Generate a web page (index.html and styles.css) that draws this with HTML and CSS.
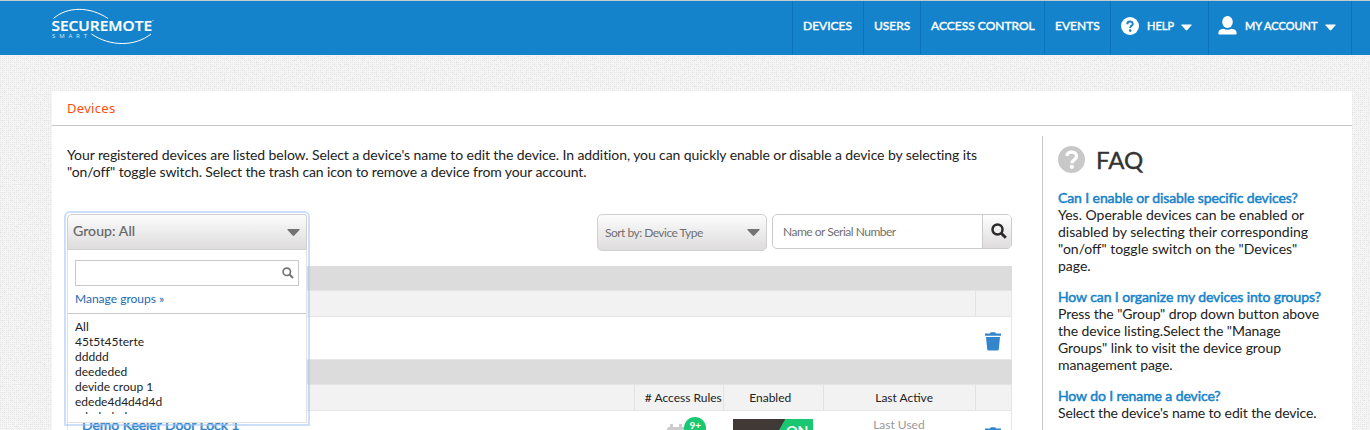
FILE: index.html
```html
<!DOCTYPE html>
<html lang="en">
<head>
<meta charset="utf-8">
<title>Devices</title>
<link rel="stylesheet" href="styles.css">
</head>
<body>
<header class="topbar">
  <svg class="logo" width="104" height="40" viewBox="0 0 104 40">
    <path class="arc" d="M1.500 9.500C15 -2.700 38 -2.700 56 9.500M39.500 25C58 37.700 83 37.700 99 25"/>
    <text class="logo-name" x="-.5" y="22.200" textLength="100.500" lengthAdjust="spacingAndGlyphs">SECUREMOTE</text>
    <text class="logo-sub" x="0" y="28.800" textLength="35" lengthAdjust="spacing">SMART</text>
    <circle class="logo-dot" cx="101" cy="11.500" r=".7"/>
  </svg>
  <nav class="nav">
    <a class="item devices">DEVICES</a>
    <a class="item users">USERS</a>
    <a class="item access">ACCESS CONTROL</a>
    <a class="item events">EVENTS</a>
    <a class="item help">
      <svg width="18" height="18" viewBox="0 0 18 18"><circle cx="9" cy="9" r="9" fill="#fff"/><path d="M6.300 7.300C6.300 3.500 11.700 3.700 11.700 6.900C11.700 8.900 9.200 8.800 9.200 11" fill="none" stroke="#1583cb" stroke-width="2"/><circle cx="9.200" cy="13.600" r="1.300" fill="#1583cb"/></svg>
      <span class="label">HELP</span>
      <svg class="caret" width="11" height="7" viewBox="0 0 11 7"><path d="M.8.5H10.200Q11 .5 10.500 1.300L6.300 6Q5.500 6.800 4.700 6L.5 1.300Q0 .5.800.5Z" fill="#fff"/></svg>
    </a>
    <a class="item account">
      <svg width="19" height="19" viewBox="0 0 19 19"><ellipse cx="9.500" cy="6" rx="5.300" ry="6" fill="#fff"/><path d="M.3 17.500C.3 14.300 2.300 12.900 5.200 12.700Q9.500 15 13.800 12.700C16.700 12.900 18.700 14.300 18.700 17.500Q18.700 18.500 17.700 18.500H1.300Q.3 18.500.3 17.500Z" fill="#fff"/></svg>
      <span class="label">MY ACCOUNT</span>
      <svg class="caret" width="11" height="7" viewBox="0 0 11 7"><path d="M.8.5H10.200Q11 .5 10.500 1.300L6.300 6Q5.500 6.800 4.700 6L.5 1.300Q0 .5.800.5Z" fill="#fff"/></svg>
    </a>
  </nav>
</header>
<main class="card">
  <h1 class="title">Devices</h1>
  <div class="columns">
    <section class="content">
      <p class="intro">Your registered devices are listed below. Select a device's name to edit the device. In addition, you can quickly enable or disable a device by selecting its<br><span class="intro-end">"on/off" toggle switch. Select the trash can icon to remove a device from your account.</span></p>
      <div class="filters">
        <div class="group">
          <div class="group-menu">
            <div class="group-button"><span>Group: All</span><svg width="13" height="7" viewBox="0 0 12 7"><path d="M0 0H12V1L6.800 6.600Q6 7.300 5.200 6.600L0 1Z" fill="#737373"/></svg></div>
            <div class="group-panel">
              <div class="group-search"><svg width="12" height="12" viewBox="0 0 12 12"><circle cx="4.800" cy="4.800" r="3.700" fill="none" stroke="#737373" stroke-width="1.700"/><path d="M7.500 7.500L11 11" stroke="#737373" stroke-width="2"/></svg></div>
              <a class="manage">Manage groups »</a>
              <ul class="group-list"><li>All</li><li>45t5t45terte</li><li>ddddd</li><li>deededed</li><li>devide croup 1</li><li>edede4d4d4d4d</li><li>edededed</li></ul>
            </div>
          </div>
        </div>
        <div class="sort"><span>Sort by: Device Type</span><svg width="13" height="7" viewBox="0 0 12 7"><path d="M0 0H12V1L6.800 6.600Q6 7.300 5.200 6.600L0 1Z" fill="#737373"/></svg></div>
        <div class="search"><div class="search-field">Name or Serial Number</div><div class="search-button"><svg width="16" height="16" viewBox="0 0 16 16"><circle cx="6.500" cy="6.500" r="5" fill="none" stroke="#2b2b2b" stroke-width="2.500"/><path d="M10 10L14.800 14.800" stroke="#2b2b2b" stroke-width="3"/></svg></div></div>
      </div>
      <div class="table">
        <div class="band"></div>
        <div class="row head"><div class="c-name"></div><div class="c-blank"></div><div class="c-del"></div></div>
        <div class="row empty"><div class="c-name"></div><div class="c-blank"></div><div class="c-del"><svg width="16" height="19" viewBox="0 0 16 19"><path d="M0 1.500H5L5.800.3H10.200L11 1.500H16V3.800H0ZM1 5H15L13.800 17.300Q13.600 18.600 12.300 18.600H3.700Q2.400 18.600 2.200 17.300Z" fill="#3385cc"/></svg></div></div>
        <div class="band second"></div>
        <div class="row head"><div class="c-name"></div><div class="c-rules">#&nbsp;Access Rules</div><div class="c-on">Enabled</div><div class="c-last">Last Active</div><div class="c-del"></div></div>
        <div class="row device">
          <div class="c-name">Demo Keeler Door Lock 1</div>
          <div class="c-rules"><span class="rules"><svg width="22" height="22" viewBox="0 0 22 22"><path d="M0 5Q0 3 2 3H3V0H6V3H12V0H15V3H18V20H0Z" fill="#ccc"/></svg><b class="badge">9+</b></span></div>
          <div class="c-on"><span class="toggle"><i>ON</i></span></div>
          <div class="c-last">Last Used</div>
          <div class="c-del"><svg width="16" height="19" viewBox="0 0 16 19"><path d="M0 1.500H5L5.800.3H10.200L11 1.500H16V3.800H0ZM1 5H15L13.800 17.300Q13.600 18.600 12.300 18.600H3.700Q2.400 18.600 2.200 17.300Z" fill="#3385cc"/></svg></div>
        </div>
      </div>
    </section>
    <aside class="faq">
      <h2><svg width="27" height="27" viewBox="0 0 27 27"><circle cx="13.500" cy="13.500" r="13.500" fill="#c8c8c8"/><path d="M8.700 9.800C9.800 4.700 18.600 5 18.600 10.300C18.600 13.700 14 13.500 14 17.200" fill="none" stroke="#fff" stroke-width="3.200"/><circle cx="13.900" cy="20.800" r="2.100" fill="#fff"/></svg><span>FAQ</span></h2>
      <h3 class="q1">Can I enable or disable specific devices?</h3>
      <p class="a1">Yes. Operable devices can be enabled or<br>disabled by selecting their corresponding<br>"on/off" toggle switch on the "Devices"<br>page.</p>
      <h3>How can I organize my devices into groups?</h3>
      <p>Press the "Group" drop down button above<br>the device listing.Select the "Manage<br>Groups" link to visit the device group<br>management page.</p>
      <h3>How do I rename a device?</h3>
      <p class="a3">Select the device's name to edit the device.</p>
    </aside>
  </div>
</main>
</body>
</html>
```
FILE: styles.css
```css
* { box-sizing: border-box; }
html, body { height: 430px; overflow: hidden; }
body {
  margin: 0;
  font-family: Lato, sans-serif;
  font-size: 14px;
  line-height: 17px;
  color: #222;
  background-color: #f7f7f7;
  background-image:
    url("data:image/svg+xml,%3Csvg xmlns='http://www.w3.org/2000/svg' width='200' height='200'%3E%3Cfilter id='n'%3E%3CfeTurbulence type='fractalNoise' baseFrequency='.5' numOctaves='2' stitchTiles='stitch'/%3E%3CfeColorMatrix values='0 0 0 0 .4 0 0 0 0 .4 0 0 0 0 .4 .4 0 0 0 -.17'/%3E%3C/filter%3E%3Crect width='200' height='200' filter='url(%23n)'/%3E%3C/svg%3E"),
    conic-gradient(from 270deg at 1px 1px, rgba(0,0,0,.05) 90deg, transparent 0);
  background-size: 200px 200px, 2px 2px;
}
h1, h2, h3, p, ul { margin: 0; padding: 0; font-weight: 400; }
.topbar {
  display: flex;
  justify-content: space-between;
  height: 55px;
  padding: 0 18px 0 52px;
  background: #1583cb;
  border-top: 1px solid #c5cdd1;
}
.logo { margin-top: 8px; overflow: visible; }
.arc { fill: none; stroke: #fff; stroke-width: 1; }
.logo-name { font: 600 14px "Open Sans", sans-serif; fill: #fff; stroke: #fff; stroke-width: .2; }
.logo-sub { font: 6px "Open Sans", sans-serif; fill: #d4e8f6; }
.logo-dot { fill: #9fcbe9; }
.nav { display: flex; border-right: 1px solid #0b73b9; }
.item {
  display: flex;
  align-items: center;
  height: 54px;
  padding: 0 0 5px 10px;
  border-left: 1px solid #0b73b9;
  color: #fff;
  font-size: 12px;
  white-space: nowrap;
  -webkit-text-stroke: .4px #fff;
}
.devices { width: 71px; }
.users { width: 57px; }
.access { width: 124px; }
.events { width: 66px; }
.help { width: 98px; }
.account { width: 143px; padding-left: 9px; }
.label { margin: 0 7px 0 8px; font-size: 11px; }
.caret { margin-top: 3px; }
.card { width: 1300px; height: 339px; margin: 36px 0 0 52px; background: #fff; overflow: hidden; }
.title {
  height: 35px;
  padding: 0 15px;
  border-bottom: 1px solid #c6c6c6;
  font: 13px/35px "Noto Sans", sans-serif;
  letter-spacing: .3px;
  color: #ff4c0b;
}
.columns { display: flex; justify-content: space-between; padding: 0 0 0 15px; }
.content { width: 945px; padding-top: 20px; }
.intro { height: 34px; white-space: nowrap; letter-spacing: -.09px; }
.intro-end { letter-spacing: -.12px; }
.filters { display: flex; margin-top: 34px; height: 52px; align-items: flex-start; }
.group { position: relative; width: 530px; }
.group-menu {
  position: absolute;
  z-index: 2;
  left: 0;
  top: 0;
  width: 240px;
  height: 209px;
  background: #fff;
  border-radius: 3px 3px 0 0;
  outline: 2px solid rgba(160,195,250,.55);
  outline-offset: 1px;
}
.group-button, .sort {
  display: flex;
  align-items: center;
  justify-content: space-between;
  border: 1px solid #d0d0d0;
  border-radius: 5px;
  background: linear-gradient(#fcfcfc, #dedcdd);
  color: #666;
}
.group-button {
  height: 36px;
  padding: 0 6px 3px 5px;
  border-radius: 5px 3px 0 0;
  letter-spacing: .1px;
  -webkit-text-stroke: .2px #666;
}
.group-button svg { margin-top: 4px; }
.group-panel { height: 173px; padding: 10px 0 0; border: 1px solid #e2e2e2; border-top: 0; font-size: 12px; line-height: 15px; }
.group-search { display: flex; align-items: center; justify-content: flex-end; width: 224px; height: 26px; margin-left: 7px; padding-right: 4px; border: 1px solid #c9c9c9; }
.manage { display: block; height: 28px; padding: 5px 7px 0; border-bottom: 1px solid #c9c9c9; color: #1b69b1; }
.group-list { height: 95px; margin-top: 5px; padding-left: 7px; overflow: hidden; list-style: none; }
.sort { width: 170px; height: 37px; padding: 0 6px 0 7px; font-size: 12px; letter-spacing: -.52px; color: #707070; }
.search { display: flex; width: 240px; height: 35px; margin-left: 5px; border: 1px solid #ccc; border-radius: 5px; overflow: hidden; font-size: 12px; color: #707070; }
.search-field { width: 209px; padding-left: 10px; line-height: 34px; letter-spacing: -.5px; }
.search-button { flex: 1; padding: 8px 0 0 8px; border-left: 1px solid #ccc; background: linear-gradient(#fff, #dedcdd); }
.table { width: 945px; }
.band { height: 24px; background: #dcdcdc; }
.second { height: 25px; border-top: 1px solid #e6e6e6; }
.row { display: flex; border: 1px solid #e5e5e5; border-width: 1px 1px 0; font-size: 12px; }
.head { height: 27px; background: #f2f2f2; border-bottom-width: 1px; line-height: 26px; text-align: center; }
.empty { height: 42px; border-top: 0; }
.device { height: 70px; border-top: 0; }
.c-name { width: 567px; }
.c-blank { width: 341px; }
.c-rules { width: 89px; }
.c-on { width: 100px; }
.c-last { width: 152px; }
.head .c-rules, .head .c-on, .head .c-last, .head .c-del { border-left: 1px solid #e2e2e2; }
.head .c-rules { padding-left: 8px; }
.head .c-on { padding-right: 7px; }
.head .c-last { padding-left: 9px; }
.c-del { width: 36px; }
.empty .c-del { padding: 15px 0 0 10px; }
.device .c-name { padding: 5px 0 0 14px; font-size: 14px; line-height: 17px; color: #3385cc; letter-spacing: -.05px; -webkit-text-stroke: .5px #3385cc; }
.device .c-rules { padding: 7px 0 0 33px; }
.rules { position: relative; display: block; }
.rules svg { margin-top: 6px; }
.badge { position: absolute; left: 17px; top: -1px; width: 22px; height: 22px; border-radius: 50%; background: #19c871; color: #fff; font-size: 10px; line-height: 17px; text-align: center; }
.device .c-on { padding: 8px 0 0 10px; }
.toggle { display: flex; justify-content: flex-end; width: 80px; height: 32px; background: #403936; }
.toggle i { width: 36px; padding-left: 9px; clip-path: polygon(8px 0, 100% 0, 100% 100%, -10px 100%); background: #19c871; color: #fff; font: 700 14px/23px Lato, sans-serif; }
.device .c-last { padding: 6px 0 0 50px; line-height: 15px; color: #999; }
.device .c-del { padding: 16px 0 0 10px; }
.faq { width: 310px; height: 330px; margin-top: 10px; padding: 10px 0 0 15px; border-left: 1px solid #c6c6c6; white-space: nowrap; letter-spacing: -.08px; }
.faq h2 { display: flex; align-items: center; gap: 11px; height: 27px; font-size: 24px; line-height: 25px; letter-spacing: 0; -webkit-text-stroke: .4px #333; color: #333; }
.faq h3 { margin-top: 14px; font-size: 14px; line-height: 17px; color: #1583cb; letter-spacing: -.1px; -webkit-text-stroke: .5px #1583cb; }
.faq .q1 { margin-top: 16px; }
.faq .a1 { letter-spacing: 0; }
.faq .a3 { letter-spacing: -.13px; }
```
